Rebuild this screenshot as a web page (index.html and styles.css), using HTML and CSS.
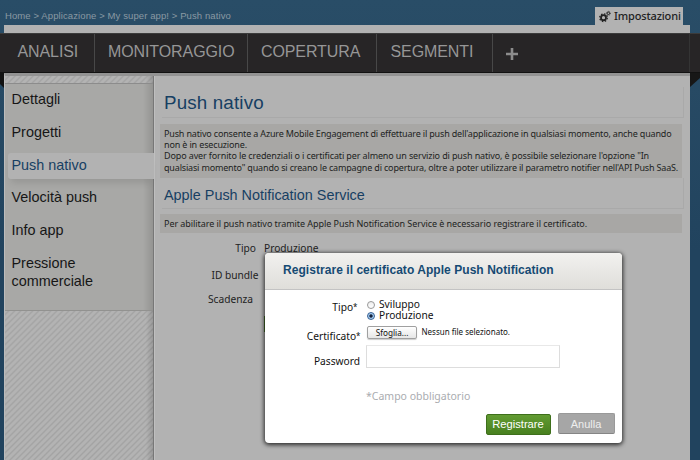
FILE: index.html
```
<!DOCTYPE html>
<html lang="it">
<head>
<meta charset="utf-8">
<title>Push nativo</title>
<link rel="stylesheet" href="styles.css">
</head>
<body>
<div class="app">
  <header class="top">
    <nav class="crumbs">Home &gt; Applicazione &gt; My super app! &gt; Push nativo</nav>
    <a class="settings">
      <svg width="12" height="13" viewBox="0 0 12 13">
        <circle cx="4.5" cy="7.7" r="2.5" fill="none" stroke="#222" stroke-width="1.8"/>
        <circle cx="4.5" cy="7.7" r="3.8" fill="none" stroke="#222" stroke-width="1.3" stroke-dasharray="1.5 1.484"/>
        <circle cx="9.4" cy="3.3" r="1.2" fill="none" stroke="#222" stroke-width="1"/>
        <circle cx="9.4" cy="3.3" r="2" fill="none" stroke="#222" stroke-width=".8" stroke-dasharray=".8 .77"/>
      </svg>
      <span>Impostazioni</span>
    </a>
  </header>
  <div class="strip"></div>
  <nav class="bar">
    <a class="t1">ANALISI</a><a class="t2">MONITORAGGIO</a><a class="t3">COPERTURA</a><a class="t4">SEGMENTI</a>
    <a class="plus"><svg width="12" height="12" viewBox="0 0 12 12"><path d="M6 0v12M0 6h12" stroke="#8c8c8c" stroke-width="2.6"/></svg></a>
  </nav>
  <div class="body">
    <svg class="fold" width="4" height="15" viewBox="0 0 4 15"><path d="M0 0h4v15L0 11z" fill="#121212"/></svg>
    <div class="page">
      <aside class="side">
        <ul class="menu">
          <li>Dettagli</li>
          <li>Progetti</li>
          <li class="on">Push nativo</li>
          <li>Velocità push</li>
          <li>Info app</li>
          <li>Pressione<br>commerciale</li>
        </ul>
      </aside>
      <main class="main">
        <h1>Push nativo</h1>
        <div class="note">
          <p class="l1">Push nativo consente a Azure Mobile Engagement di effettuare il push dell'applicazione in qualsiasi momento, anche quando</p>
          <p class="l2">non è in esecuzione.</p>
          <p class="l3">Dopo aver fornito le credenziali o i certificati per almeno un servizio di push nativo, è possibile selezionare l'opzione "In</p>
          <p class="l4">qualsiasi momento" quando si creano le campagne di copertura, oltre a poter utilizzare il parametro notifier nell'API Push SaaS.</p>
        </div>
        <h2>Apple Push Notification Service</h2>
        <div class="note small"><p class="l5">Per abilitare il push nativo tramite Apple Push Notification Service è necessario registrare il certificato.</p></div>
        <dl class="facts">
          <dt class="f1">Tipo</dt><dd>Produzione</dd>
          <dt class="f2">ID bundle</dt><dd></dd>
          <dt class="f3">Scadenza</dt><dd></dd>
          <dt></dt><dd class="action"></dd>
        </dl>
      </main>
    </div>
    <svg class="fold" width="10" height="15" viewBox="0 0 10 15"><path d="M0 0h10v5L0 14z" fill="#171717"/></svg>
  </div>
</div>
<section class="dialog">
  <h3>Registrare il certificato Apple Push Notification</h3>
  <form class="form">
    <div class="row r1">
      <label class="lab a">Tipo<sup>*</sup></label>
      <div class="radios">
        <label><i class="radio"></i>Sviluppo</label>
        <label><i class="radio sel"></i>Produzione</label>
      </div>
    </div>
    <div class="row r2">
      <label class="lab b">Certificato<sup>*</sup></label>
      <button type="button" class="browse">Sfoglia...</button>
      <span class="file">Nessun file selezionato.</span>
    </div>
    <div class="row r3">
      <label class="lab c">Password</label>
      <div class="field"></div>
    </div>
    <p class="req">*Campo obbligatorio</p>
    <div class="buttons">
      <button type="button" class="ok">Registrare</button>
      <button type="button" class="no">Anulla</button>
    </div>
  </form>
</section>
</body>
</html>
```
FILE: styles.css
```
* { box-sizing: border-box; }
body, h1, h2, h3, p, ul, dl, dd { margin: 0; padding: 0; font-weight: normal; }
body { width: 700px; height: 460px; overflow: hidden; position: relative; font-family: "Liberation Sans", sans-serif; white-space: nowrap; }
.app { height: 460px; display: flex; flex-direction: column; background: linear-gradient(#294d67, #284b65 60px, #21435e 250px, #21435e); }

.top { height: 25px; padding: 7px 17px 0 5px; display: flex; justify-content: space-between; flex: none; }
.crumbs { font-size: 9.5px; letter-spacing: .1px; line-height: 10px; padding-top: 4px; color: #8999a3; }
.settings { width: 88px; display: flex; background: #b2b2b2; padding-left: 3px; font: 500 11px/15px "Noto Sans", sans-serif; color: #222; letter-spacing: -.15px; }
.settings svg { flex: none; margin: 3px 3px 0 1px; }
.settings span { padding-top: 1px; }
.strip { height: 8px; margin: 0 10px 0 4px; background: #b2b2b2; flex: none; }

.bar { height: 40px; flex: none; display: flex; background: #272526; border-top: 1px solid #3b3b3b; border-bottom: 1px solid #121212; font-size: 16px; line-height: 36px; color: #969696; }
.bar a { border-right: 1px solid #484848; }
.t1 { width: 95px; padding-left: 17.5px; letter-spacing: -.1px; }
.t2 { width: 153px; padding-left: 13px; letter-spacing: -.1px; }
.t3 { width: 129px; padding-left: 13px; letter-spacing: -.1px; }
.t4 { width: 116px; padding-left: 13.5px; letter-spacing: -.1px; }
.bar .plus { width: 197px; padding: 14px 0 0 13px; line-height: 0; border-color: #343434; }

.body { flex: 1; display: flex; min-height: 0; }
.fold { flex: none; display: block; }
.page { width: 686px; display: flex; background: #b2b2b2; border-top: 3px solid #939393; border-left: 1px solid #bcbcbc; }
.side { width: 149px; flex: none; padding-top: 7px; border-right: 1px solid #777; background: linear-gradient(90deg, transparent 141px, rgba(0,0,0,.14)), repeating-linear-gradient(135deg, #b3b3b3 0 1.6px, #a3a3a3 3px, #b3b3b3 4.25px); }
.menu { list-style: none; height: 228px; padding-top: 3px; border-top: 1px solid #8c8c8c; border-bottom: 1px solid #929290; background: linear-gradient(90deg, #a8a8a6 138px, #949492); font-size: 14.4px; line-height: 18px; color: #161616; }
.menu li { padding: 3px 0 0 6.5px; height: 32.9px; }
.menu .on { position: relative; height: 26px; margin: 0 -1px 6px 3px; padding: 3px 0 0 3.5px; border-radius: 3px 0 0 3px; background: #b2b2b2; color: #173f63; box-shadow: 0 7px 7px -3px rgba(0,0,0,.1); }

.main { flex: 1; min-width: 0; padding: 11px 6px 0 5px; border-left: 1px solid #bfbfbf; color: #222; }
h1, h2 { color: #173f63; margin: 0 0 0 2px; border-right: 1px solid #a9a9a9; border-bottom: 1px solid #a9a9a9; padding-left: 2px; }
h1 { height: 31px; font-size: 18.8px; line-height: 32px; letter-spacing: .15px; }
h2 { height: 31px; font-size: 14.4px; line-height: 34px; }
.note { width: 522px; height: 54px; margin-top: 6px; padding: 4px 0 0 4px; background: #a8a7a5; font: 9px/12px "Noto Sans", sans-serif; color: #1d1f22; }
.small { height: 19px; margin-top: 5px; padding-top: 4px; }
.l1 { line-height: 11px; letter-spacing: -.165px; }
.l2 { line-height: 11px; letter-spacing: -.15px; }
.l3 { letter-spacing: -.126px; }
.l4 { letter-spacing: -.173px; }
.l5 { letter-spacing: -.057px; }
.facts { display: grid; grid-template-columns: 104px 60px; grid-template-rows: 27px 24px 24px 17px; padding-top: 8px; font: 10.2px/14px "Noto Sans", sans-serif; }
.facts dt { text-align: right; }
.f1 { padding-right: 8px; }
.f2 { padding-right: 5.5px; }
.f3 { padding-right: 11px; }
.action { background: #48702c; height: 16px; }

.dialog { position: absolute; left: 265px; top: 253px; width: 357px; height: 190px; background: #fff; border-radius: 4px; overflow: hidden; box-shadow: 0 1px 4px 1px rgba(0,0,0,.75); color: #111; }
h3 { height: 37px; padding-left: 18px; background: linear-gradient(#f2f1ef, #dfdeda); border-bottom: 1px solid #c3c3c3; font: bold 12px/34px "Liberation Sans", sans-serif; letter-spacing: .05px; color: #164a73; }
.form { font: 10.2px/11px "Noto Sans", sans-serif; }
.row { display: flex; }
.lab { width: 102px; text-align: right; flex: none; }
sup { font-size: 8px; line-height: 0; vertical-align: 1px; }
.r1 { height: 35px; padding-top: 9px; }
.lab.a { padding: 3px 9.5px 0 0; }
.lab.b { padding: 6px 6.5px 0 0; }
.lab.c { padding: 11px 7px 0 0; }
.radios label { display: flex; height: 11px; align-items: center; }
.radio { width: 8px; height: 8px; border: 1px solid #999; border-radius: 50%; background: linear-gradient(#eee, #fff); margin: 0 4px 0 0; }
.sel { border-color: #365f91; background: radial-gradient(circle, #12213b 0 1.2px, #a6cdf2 2.2px); }
.r2 { height: 20px; }
.browse { width: 50px; height: 13px; margin-top: 1px; padding: 0; border: 1px solid #a0a0a0; border-radius: 2px; background: linear-gradient(#fff, #e6e6e6); box-shadow: 0 1px 1px rgba(0,0,0,.2); font: 8.2px/11px "Noto Sans", sans-serif; color: #111; }
.file { font-size: 8px; padding: 1px 0 0 4.5px; }
.field { width: 194px; height: 23px; border: 1px solid #ddd; border-top-color: #e8e8e8; margin-left: -1px; }
.req { padding: 22px 0 0 101px; font-size: 10.5px; line-height: 12px; color: #aaacb0; }
.buttons { display: flex; padding: 11px 0 0 221px; gap: 7px; }
.buttons button { padding: 0; border-radius: 2px; color: #fff; font: 11.2px/18px "Liberation Sans", sans-serif; }
.ok { width: 65px; height: 21px; margin-top: 1px; border: 1px solid #3e6f1b; background: linear-gradient(#629b32, #48801f); }
.buttons .ok { padding: 0 1px 1px 0; }
.buttons .no { width: 57px; height: 21px; padding: 0 1px 0 0; border: 1px solid #999; border-bottom-color: #858585; background: #a6a6a6; color: #eee; font-size: 11px; }
```
